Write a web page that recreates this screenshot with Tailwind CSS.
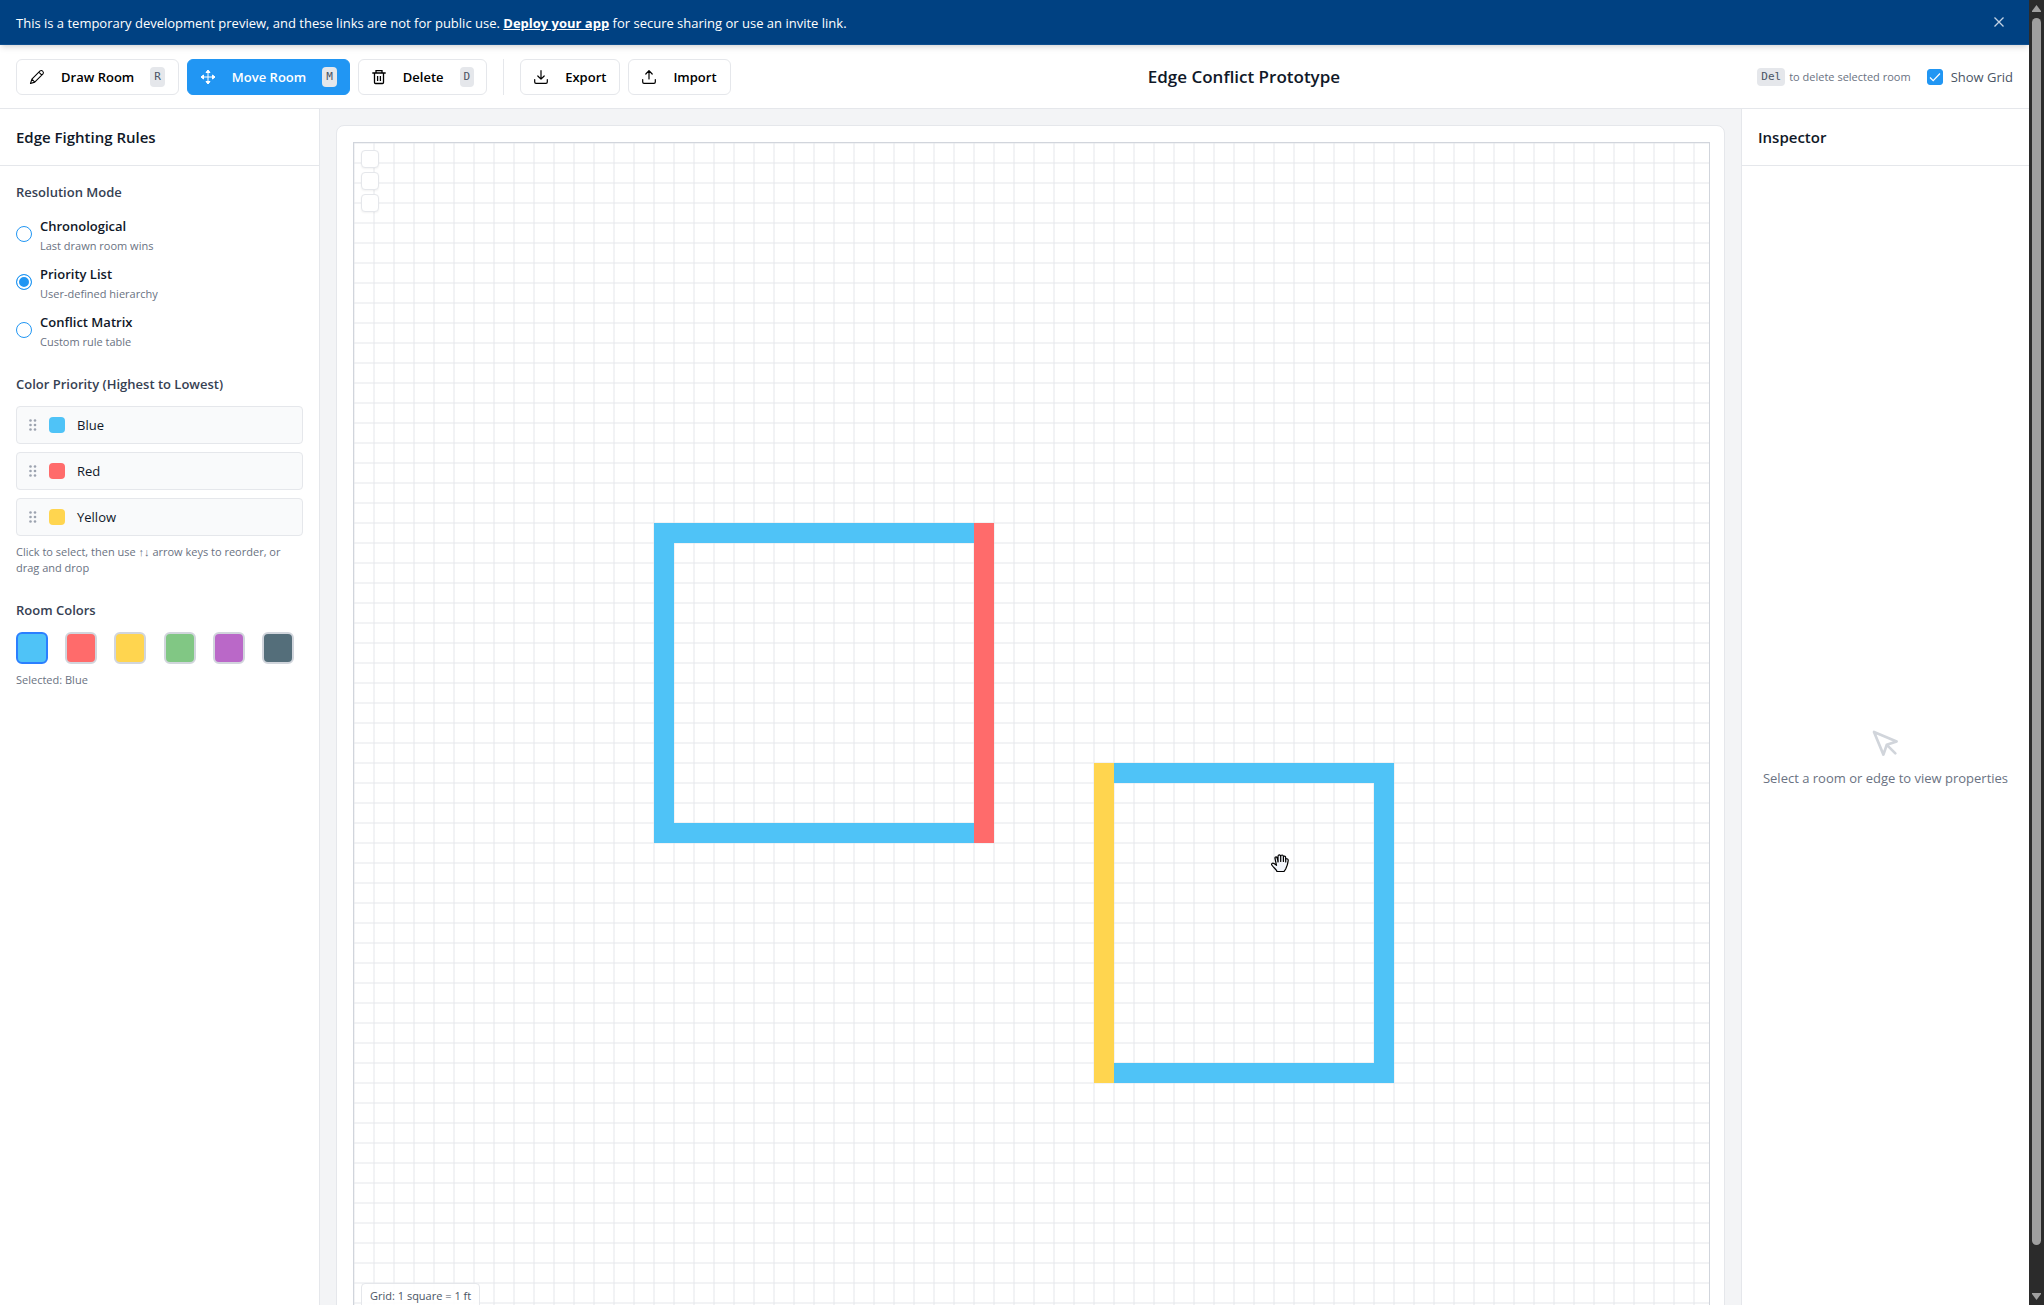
<!DOCTYPE html>
<html lang="en">
<head>
<meta charset="utf-8">
<meta name="viewport" content="width=device-width, initial-scale=1">
<title>Edge Conflict Prototype</title>
<script src="https://cdn.jsdelivr.net/npm/@tailwindcss/browser@4"></script>
</head>
<body class="flex h-screen overflow-hidden bg-white font-['Open_Sans','Noto_Sans',sans-serif] text-[13px] leading-5 text-gray-900">
<div class="h-screen min-w-0 flex-1 overflow-hidden">

  <!-- Preview banner -->
  <div class="relative z-10 flex h-[45px] items-center justify-between border-b border-[#0f4f8f] bg-[#004182] pl-4 pr-6 font-medium text-white shadow-md">
    <p class="pt-0.5">This is a temporary development preview, and these links are not for public use. <a href="#" class="font-bold underline">Deploy your app</a> for secure sharing or use an invite link.</p>
    <button type="button" aria-label="Dismiss" class="flex size-3 items-center justify-center">
      <svg class="size-3" viewBox="0 0 12 12" fill="none" stroke="#c3d3e4" stroke-width="1.3"><path d="M1.500 1.500l9 9M10.500 1.500l-9 9"/></svg>
    </button>
  </div>

  <div class="flex h-screen flex-col">
    <!-- Toolbar -->
    <header class="flex h-16 shrink-0 items-center justify-between border-b border-gray-200 bg-white px-4">
      <div class="flex items-center gap-2 font-semibold text-black">
        <button type="button" class="flex h-9 items-center gap-4 rounded-md border border-gray-200 bg-white pl-3 pr-[13px]">
          <svg class="size-4" viewBox="0 0 15 15" fill="none" stroke="currentColor" stroke-width="1" stroke-linejoin="round"><path d="M1.400 13.600l1.300-4.100 7.700-7.700q1.300-1 2.500.3t.2 2.500L5.400 12.300zM9.200 3l2.800 2.800M2.700 9.500l2.700 2.800"/></svg>
          Draw Room
          <kbd class="rounded bg-gray-200 px-1 font-['DejaVu_Sans_Mono',monospace] text-[11px] font-normal text-gray-600">R</kbd>
        </button>
        <button type="button" class="flex h-9 items-center gap-4 rounded-md border border-[#2196f3] bg-[#2196f3] px-3 text-white">
          <svg class="size-4" viewBox="0 0 16 16" fill="none" stroke="currentColor" stroke-width="1"><path d="M8 2v12M2 8h12"/><path fill="currentColor" stroke-linejoin="round" d="M8 1L6 3.500h4zM8 15l-2-2.500h4zM1 8l2.500-2v4zM15 8l-2.500-2v4z"/></svg>
          Move Room
          <kbd class="rounded bg-gray-200 px-1 font-['DejaVu_Sans_Mono',monospace] text-[11px] font-normal text-gray-600">M</kbd>
        </button>
        <button type="button" class="flex h-9 items-center gap-4 rounded-md border border-gray-200 bg-white px-3">
          <svg class="size-4" viewBox="0 0 16 16" fill="none" stroke="currentColor" stroke-width="1.3"><path d="M1.300 4h13.400M5 4V1.700h6V4M3.500 4v9.500q0 1 1 1h7q1 0 1-1V4M6.600 7v5M9.400 7v5"/></svg>
          Delete
          <kbd class="rounded bg-gray-200 px-1 font-['DejaVu_Sans_Mono',monospace] text-[11px] font-normal text-gray-600">D</kbd>
        </button>
        <div class="mx-2 h-9 w-px bg-gray-200"></div>
        <button type="button" class="flex h-9 items-center gap-4 rounded-md border border-gray-200 bg-white pl-3 pr-[13px]">
          <svg class="size-4" viewBox="0 0 16 16" fill="none" stroke="currentColor" stroke-width="1.200" stroke-linecap="round" stroke-linejoin="round"><path d="M8 1.700V10M4.800 7L8 10.200 11.200 7M1.700 10.500v2.500q0 1.300 1.300 1.300h10q1.300 0 1.300-1.300v-2.500"/></svg>
          Export
        </button>
        <button type="button" class="flex h-9 items-center gap-4 rounded-md border border-gray-200 bg-white pl-3 pr-[13px]">
          <svg class="size-4" viewBox="0 0 16 16" fill="none" stroke="currentColor" stroke-width="1.200" stroke-linecap="round" stroke-linejoin="round"><path d="M8 10V1.700M4.800 5L8 1.700 11.200 5M1.700 10.500v2.500q0 1.300 1.300 1.300h10q1.300 0 1.300-1.300v-2.500"/></svg>
          Import
        </button>
      </div>
      <h1 class="text-[17px] font-semibold leading-7">Edge Conflict Prototype</h1>
      <div class="flex items-center gap-4">
        <p class="flex items-center gap-1 text-[11px] leading-4 text-gray-500"><kbd class="rounded bg-gray-200 px-1 font-['DejaVu_Sans_Mono',monospace] leading-[18px] text-gray-600">Del</kbd> to delete selected room</p>
        <div class="flex items-center gap-2">
          <span class="relative flex size-4">
            <input id="grid" type="checkbox" checked class="size-4 appearance-none rounded-[3px] border border-[#2196f3] checked:bg-[#2196f3]">
            <svg class="pointer-events-none absolute inset-0 size-4" viewBox="0 0 16 16" fill="none" stroke="white" stroke-width="1.200"><path d="M3 8.500l3.200 3.200L13 4.500"/></svg>
          </span>
          <label for="grid" class="text-gray-600">Show Grid</label>
        </div>
      </div>
    </header>

    <div class="flex min-h-0 flex-1">
      <!-- Rules sidebar -->
      <aside class="w-80 shrink-0 border-r border-gray-200 bg-white">
        <div class="border-b border-gray-200 p-4">
          <h2 class="text-[15px] font-semibold leading-6">Edge Fighting Rules</h2>
        </div>
        <div class="p-4">
          <h3 class="font-semibold leading-5 text-gray-700">Resolution Mode</h3>
          <div class="mt-3 flex flex-col gap-2">
            <label class="flex h-10 items-center gap-2">
              <input type="radio" name="mode" class="size-4 appearance-none rounded-full border border-[#2196f3]">
              <span class="pt-1"><span class="block font-semibold">Chronological</span><span class="block text-[11px] text-gray-500">Last drawn room wins</span></span>
            </label>
            <label class="flex h-10 items-center gap-2">
              <input type="radio" name="mode" checked class="size-4 appearance-none rounded-full border border-[#2196f3] bg-[#2196f3] shadow-[inset_0_0_0_2px_white]">
              <span class="pt-1"><span class="block font-semibold">Priority List</span><span class="block text-[11px] text-gray-500">User-defined hierarchy</span></span>
            </label>
            <label class="flex h-10 items-center gap-2">
              <input type="radio" name="mode" class="size-4 appearance-none rounded-full border border-[#2196f3]">
              <span class="pt-1"><span class="block font-semibold">Conflict Matrix</span><span class="block text-[11px] text-gray-500">Custom rule table</span></span>
            </label>
          </div>

          <h3 class="mt-6 font-semibold leading-5 text-gray-700">Color Priority (Highest to Lowest)</h3>
          <ul class="mt-3 flex flex-col gap-2">
            <li class="flex h-[38px] items-center gap-3 rounded border border-gray-200 bg-gray-50 px-3">
              <svg class="h-3 w-2" viewBox="0 0 8 12" fill="#9ca3af"><circle cx="1.500" cy="1.500" r="1.300"/><circle cx="6" cy="1.500" r="1.300"/><circle cx="1.500" cy="6" r="1.300"/><circle cx="6" cy="6" r="1.300"/><circle cx="1.500" cy="10.500" r="1.300"/><circle cx="6" cy="10.500" r="1.300"/></svg>
              <span class="size-4 rounded bg-[#4fc3f7]"></span>Blue
            </li>
            <li class="flex h-[38px] items-center gap-3 rounded border border-gray-200 bg-gray-50 px-3">
              <svg class="h-3 w-2" viewBox="0 0 8 12" fill="#9ca3af"><circle cx="1.500" cy="1.500" r="1.300"/><circle cx="6" cy="1.500" r="1.300"/><circle cx="1.500" cy="6" r="1.300"/><circle cx="6" cy="6" r="1.300"/><circle cx="1.500" cy="10.500" r="1.300"/><circle cx="6" cy="10.500" r="1.300"/></svg>
              <span class="size-4 rounded bg-[#ff6b6b]"></span>Red
            </li>
            <li class="flex h-[38px] items-center gap-3 rounded border border-gray-200 bg-gray-50 px-3">
              <svg class="h-3 w-2" viewBox="0 0 8 12" fill="#9ca3af"><circle cx="1.500" cy="1.500" r="1.300"/><circle cx="6" cy="1.500" r="1.300"/><circle cx="1.500" cy="6" r="1.300"/><circle cx="6" cy="6" r="1.300"/><circle cx="1.500" cy="10.500" r="1.300"/><circle cx="6" cy="10.500" r="1.300"/></svg>
              <span class="size-4 rounded bg-[#ffd54f]"></span>Yellow
            </li>
          </ul>
          <p class="mt-2 text-[11px] leading-4 text-gray-500">Click to select, then use ↑↓ arrow keys to reorder, or drag and drop</p>

          <h3 class="mt-6 font-semibold leading-5 text-gray-700">Room Colors</h3>
          <div class="mt-3 grid grid-cols-6 gap-2">
            <button type="button" aria-label="Blue" class="size-8 rounded-md border-2 border-blue-500 bg-[#4fc3f7]"></button>
            <button type="button" aria-label="Red" class="size-8 rounded-md border-2 border-gray-300 bg-[#ff6b6b]"></button>
            <button type="button" aria-label="Yellow" class="size-8 rounded-md border-2 border-gray-300 bg-[#ffd54f]"></button>
            <button type="button" aria-label="Green" class="size-8 rounded-md border-2 border-gray-300 bg-[#81c784]"></button>
            <button type="button" aria-label="Purple" class="size-8 rounded-md border-2 border-gray-300 bg-[#ba68c8]"></button>
            <button type="button" aria-label="Slate" class="size-8 rounded-md border-2 border-gray-300 bg-[#546e7a]"></button>
          </div>
          <p class="mt-2 text-[11px] leading-4 text-gray-500">Selected: Blue</p>
        </div>
      </aside>

      <!-- Drawing area -->
      <main class="flex min-w-0 flex-1 bg-gray-100 p-4">
        <div class="flex min-w-0 flex-1 rounded-lg border border-gray-200 bg-white py-4 pl-4 pr-[14px]">
          <div class="relative min-w-0 flex-1 overflow-hidden border border-gray-300 bg-[linear-gradient(to_right,#e5e7eb80_1px,transparent_1px,transparent_19px,#e5e7eb80_19px),linear-gradient(to_bottom,#e5e7eb80_1px,transparent_1px,transparent_19px,#e5e7eb80_19px)] bg-[length:20px_20px]">
            <div class="absolute left-[300px] top-[380px] h-80 w-[340px]">
              <div class="absolute inset-0 border-[20px] border-[#4fc3f7]"></div>
              <div class="absolute inset-y-0 right-0 w-5 bg-[#ff6b6b]"></div>
            </div>
            <div class="absolute left-[740px] top-[620px] h-80 w-[300px]">
              <div class="absolute inset-0 border-[20px] border-[#4fc3f7]"></div>
              <div class="absolute inset-y-0 left-0 w-5 bg-[#ffd54f]"></div>
            </div>
            <!-- Grab cursor -->
            <svg class="absolute left-[917px] top-[711px] h-[19px] w-[18px]" viewBox="0 0 18 19" fill="#f2f5fb" stroke="black" stroke-width="1.200" stroke-linejoin="round" stroke-linecap="round"><path d="M6 17.500c-.4-1.800-3.200-3.600-5.200-6.500-.7-1.500.8-2.300 2.200-1.400l2.500 1.700L4 4.500c-.3-1.600 1.300-2.200 2-.9L7 7V2.500C7 .5 9.200.4 9.500 2l.6-.6c1.100-.9 2.300-.1 2.300 1.100 1.200-.8 2.300-.1 2.300 1.500v1c1.500-.7 2.600.2 2.500 1.600-.4 3.500-1.300 5.900-2.500 8.400-.8 1.300-1.200 1.700-1.700 2.500z"/><path fill="none" d="M7 7v1M9.700 2v5.500M12.400 3v4.500M14.700 5v3"/></svg>
            <div class="absolute left-[7px] top-[7px] flex flex-col gap-1">
              <button type="button" aria-label="Zoom in" class="size-[18px] rounded border border-gray-200 bg-white shadow-xs"></button>
              <button type="button" aria-label="Zoom out" class="size-[18px] rounded border border-gray-200 bg-white shadow-xs"></button>
              <button type="button" aria-label="Reset view" class="size-[18px] rounded border border-gray-200 bg-white shadow-xs"></button>
            </div>
            <p class="absolute bottom-[7px] left-[7px] rounded border border-gray-200 bg-white/90 px-2 py-1 text-[11px] leading-4 text-gray-600">Grid: 1 square = 1 ft</p>
          </div>
        </div>
      </main>

      <!-- Inspector -->
      <aside class="flex w-72 shrink-0 flex-col border-l border-gray-200 bg-white">
        <div class="border-b border-gray-200 p-4">
          <h2 class="text-[15px] font-semibold leading-6">Inspector</h2>
        </div>
        <div class="flex flex-1 flex-col items-center justify-center gap-2 text-gray-500">
          <svg class="size-8" viewBox="0 0 24 24" fill="none" stroke="#d1d5db" stroke-width="2" stroke-linecap="round" stroke-linejoin="round"><path d="M3 3l7.070 16.970 2.510-7.390 7.390-2.510zM13 13l6 6"/></svg>
          <p class="whitespace-nowrap">Select a room or edge to view properties</p>
        </div>
      </aside>
    </div>
  </div>
</div>

<!-- Page scrollbar -->
<div class="flex h-screen w-[15px] shrink-0 flex-col items-center bg-[#2b2b2b] py-[5px]">
  <svg class="h-[7px] w-[9px] shrink-0" viewBox="0 0 9 7" fill="#9f9f9f"><path d="M4.500 0L9 6v1H0V6z"/></svg>
  <div class="mb-12 mt-[6px] w-[9px] flex-1 rounded-full bg-[#9f9f9f]"></div>
  <svg class="h-[7px] w-[9px] shrink-0" viewBox="0 0 9 7" fill="#9f9f9f"><path d="M4.500 7L9 1V0H0v1z"/></svg>
</div>
</body>
</html>
